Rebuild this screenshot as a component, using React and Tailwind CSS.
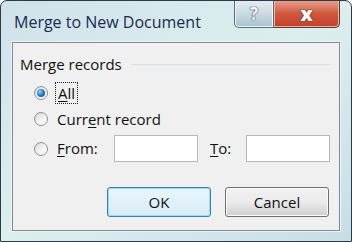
import React from "react";

const Radio = ({ checked }) => (
  <span className="relative flex h-[14px] w-[14px] shrink-0 items-center justify-center rounded-full border border-[#8f9194] bg-gradient-to-br from-[#d4d6d8] via-[#f2f2f2] to-[#ffffff]">
    {checked && (
      <span className="h-[8px] w-[8px] rounded-full bg-[radial-gradient(circle_at_35%_35%,#8fd0f5,#1d76c0_55%,#0d3f7a)]" />
    )}
  </span>
);

const Field = () => (
  <div className="h-[27px] w-[84px] border border-[#b5b8bc] bg-white" />
);

const DialogButton = ({ label, focused }) => (
  <button
    className={
      "flex h-[30px] w-[104px] items-center justify-center rounded-[3px] border text-[15px] text-[#111] " +
      (focused
        ? "border-[#3c7fb1] bg-gradient-to-b from-[#eaf6fd] to-[#d7ecf9] shadow-[inset_0_0_0_1px_#9ad9f8]"
        : "border-[#707070] bg-gradient-to-b from-[#f2f2f2] via-[#ebebeb] to-[#cfcfcf] shadow-[inset_0_0_0_1px_#fbfbfb]")
    }
  >
    {label}
  </button>
);

export default function App() {
  return (
    <div
      className="h-[242px] w-[352px] overflow-hidden rounded-t-[7px] border border-[#2f3a44] bg-gradient-to-br from-[#cfe2ea] via-[#dcefee] to-[#c9dde8] text-[#111]"
      style={{ fontFamily: '"Open Sans", "Noto Sans", Arial, sans-serif' }}
    >
      {/* title bar */}
      <div className="flex h-[41px] items-start">
        <div className="pl-[13px] pt-[9px] text-[16px] text-[#1b2a4e]">
          Merge to New Document
        </div>
        <div className="ml-auto mr-[11px] flex h-[28px] -mt-px">
          <div className="flex w-[40px] items-center justify-center rounded-bl-[5px] border border-t-0 border-[#5c6b78] bg-gradient-to-b from-[#e4eef2] via-[#c9dbe2] to-[#a9c2cc] shadow-[inset_0_0_0_1px_#eef6f9]">
            <span
              className="text-[17px] font-bold leading-none text-white"
              style={{ textShadow: "0 0 1px #3a4652, 0 0 1px #3a4652, 0 0 1px #3a4652" }}
            >
              ?
            </span>
          </div>
          <div className="flex w-[66px] items-center justify-center rounded-br-[5px] border border-l-0 border-t-0 border-[#5c3a33] bg-gradient-to-b from-[#e8a493] via-[#d0573d] to-[#c4402a] shadow-[inset_0_0_0_1px_#eeb4a5]">
            <span
              className="text-[20px] font-extrabold leading-none text-white"
              style={{ textShadow: "0 0 1px #3b2a26, 0 0 1px #3b2a26, 0 0 1px #3b2a26" }}
            >
              x
            </span>
          </div>
        </div>
      </div>

      {/* content panel */}
      <div className="mx-[11px] h-[189px] border border-[#7d8a96] bg-[#f0f0f0] shadow-[0_0_0_1px_#eef5f8]">
        <div className="flex items-center pl-[7px] pt-[10px]">
          <span className="text-[15px] leading-[22px]">Merge records</span>
          <div className="ml-[9px] mr-[9px] mt-[1px] h-px flex-1 bg-[#d5dfe5]" />
        </div>

        <div className="mt-[7px] flex flex-col gap-[4px] pl-[21px] text-[15px]">
          <div className="flex h-[22px] items-center gap-[7px]">
            <Radio checked />
            <span className="border border-dotted border-[#222] px-[2px] leading-[20px]">
              <span className="underline underline-offset-2">A</span>ll
            </span>
          </div>
          <div className="flex h-[22px] items-center gap-[9px]">
            <Radio />
            <span>
              Curr<span className="underline underline-offset-2">e</span>nt record
            </span>
          </div>
          <div className="mt-[1px] flex h-[27px] items-center">
            <Radio />
            <span className="ml-[9px] w-[57px]">
              <span className="underline underline-offset-2">F</span>rom:
            </span>
            <Field />
            <span className="ml-[12px] w-[36px]">
              <span className="underline underline-offset-2">T</span>o:
            </span>
            <Field />
          </div>
        </div>

        <div className="mt-[25px] flex gap-[14px] pl-[94px]">
          <DialogButton label="OK" focused />
          <DialogButton label="Cancel" />
        </div>
      </div>
    </div>
  );
}
